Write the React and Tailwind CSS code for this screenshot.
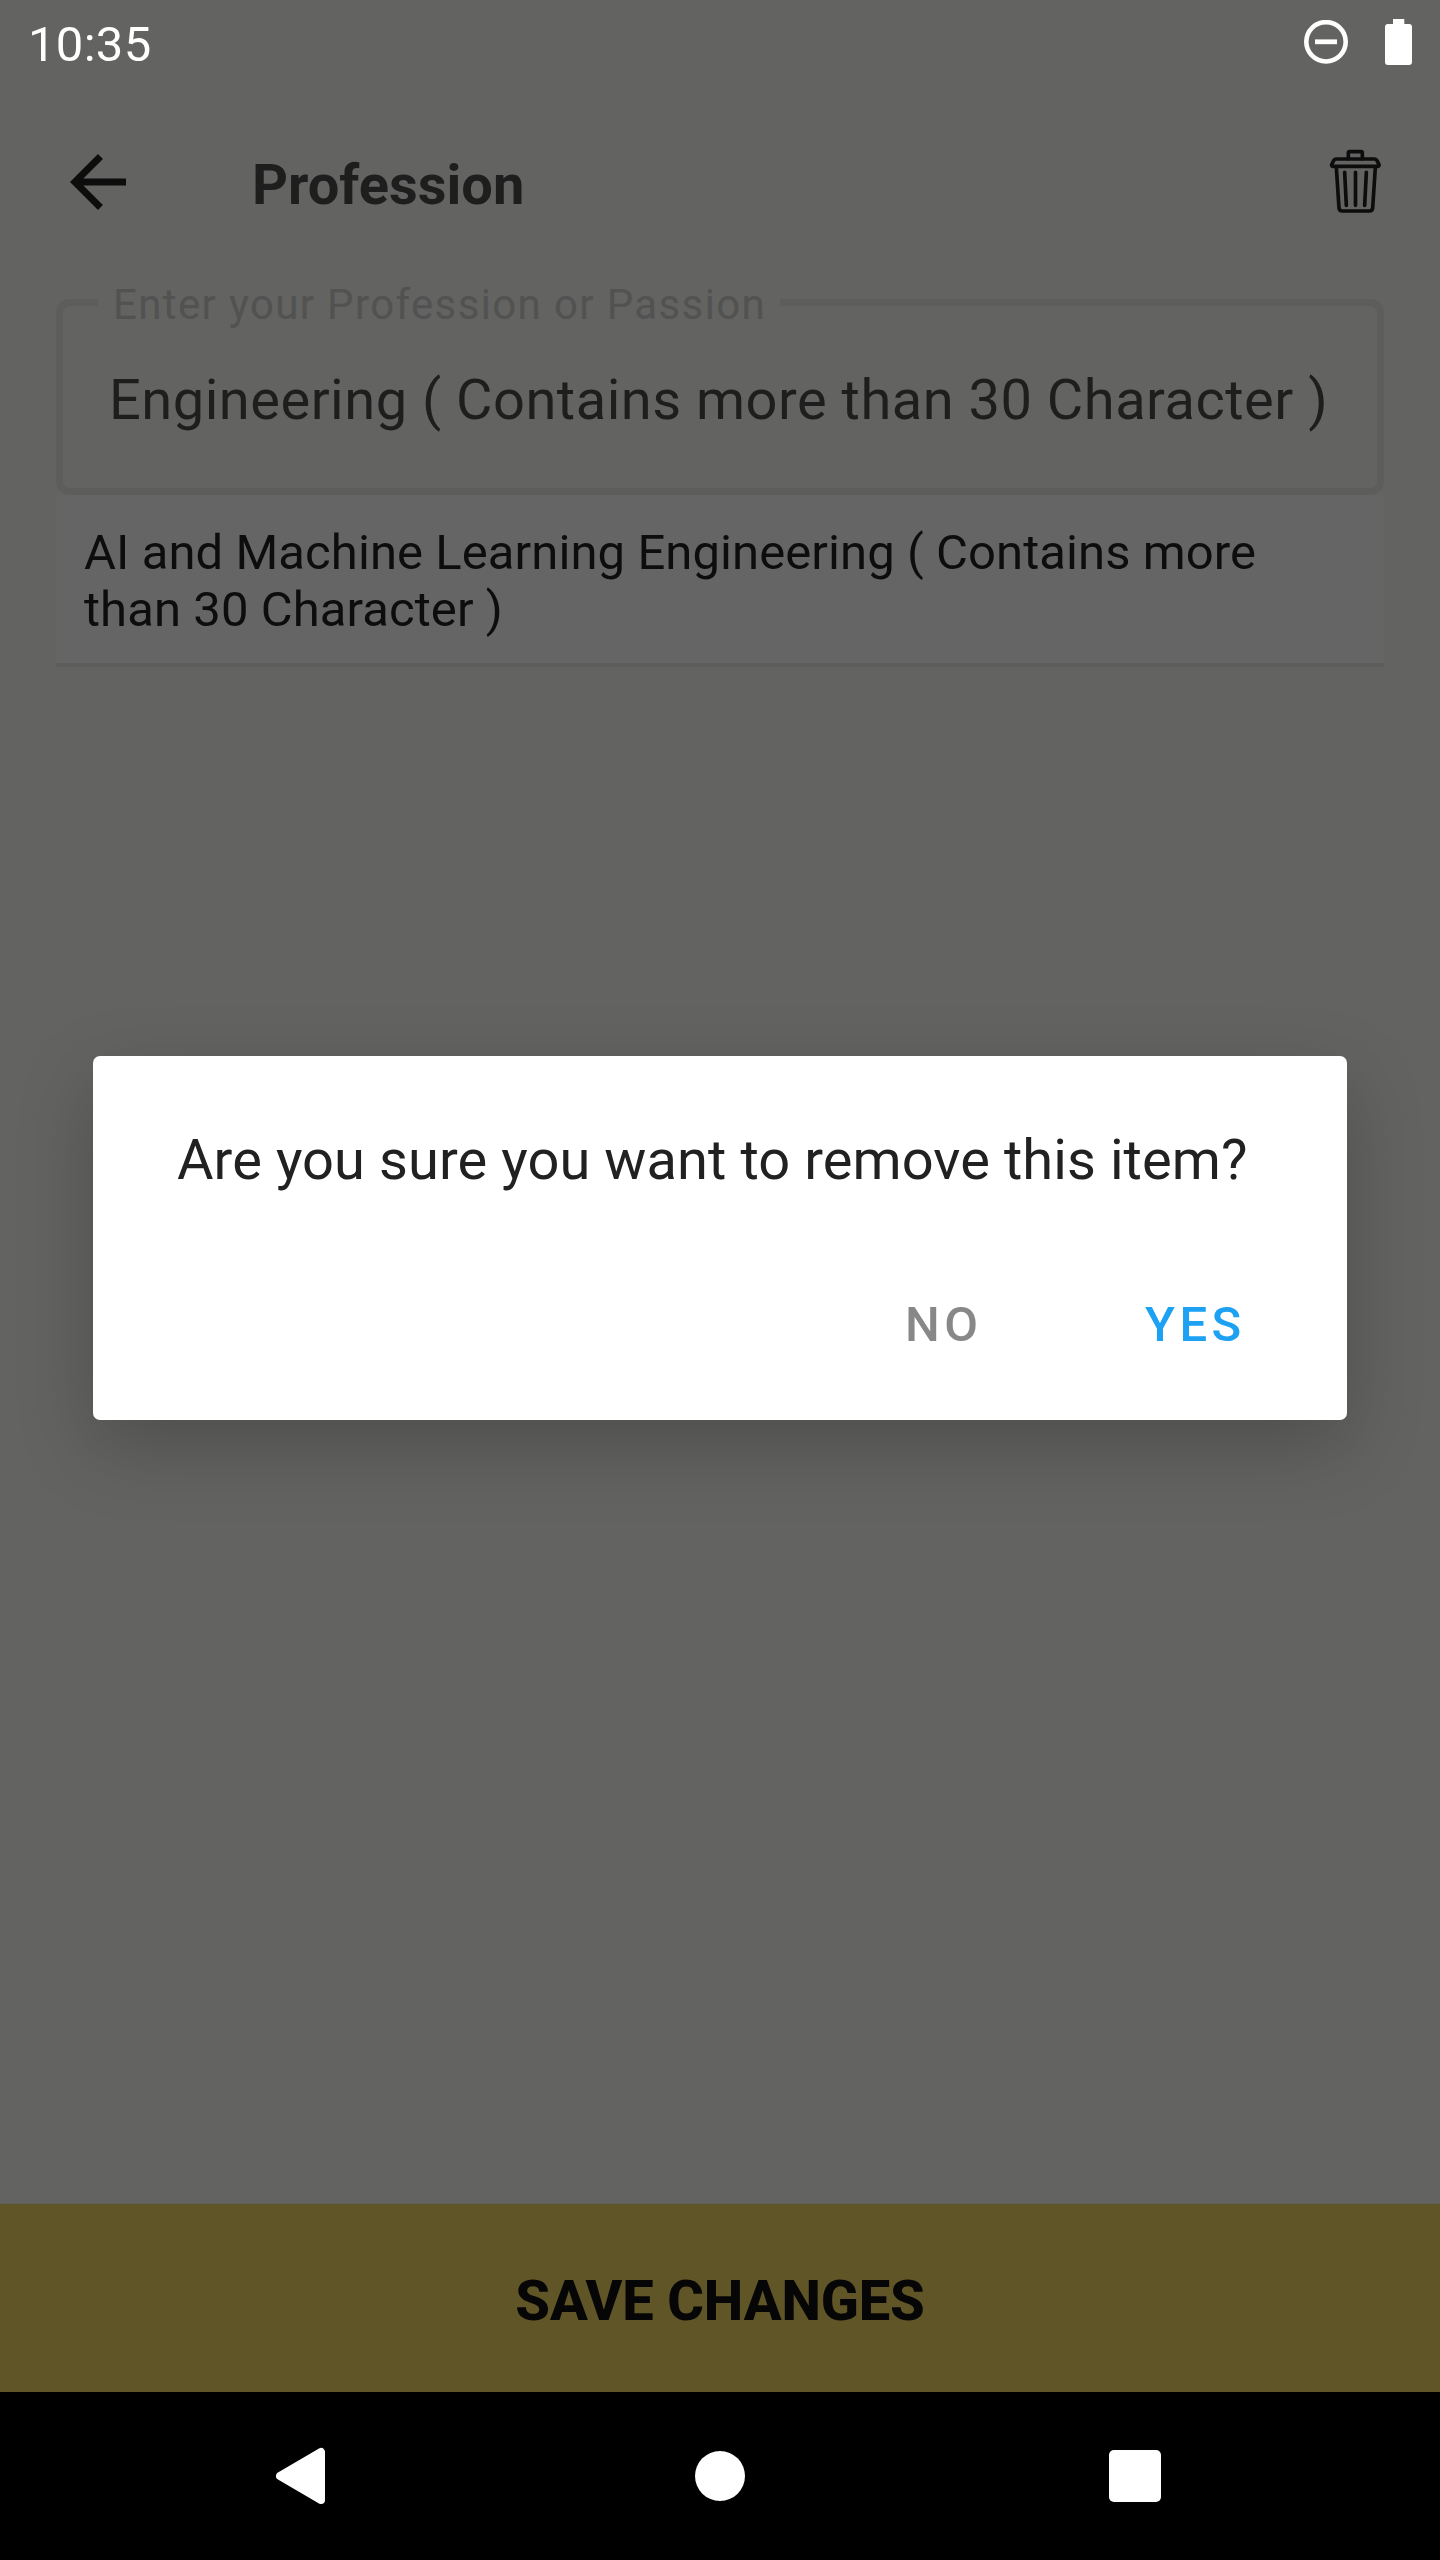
function StatusBar() {
  return (
    <div className="flex h-[84px] justify-between pl-[28px] pr-[28px] text-white">
      <span className="pt-[16px] text-[49px] leading-[57px] tracking-[0.300px]">10:35</span>
      <div className="flex gap-[37px] pt-[19px]">
        <svg className="mt-[1px] h-[45px] w-[44px]" viewBox="0 0 44 45" fill="none" stroke="currentColor">
          <circle cx="22" cy="21.800" r="19.7" strokeWidth="4.6" />
          <path d="M11 21.800h22" strokeWidth="4.8" />
        </svg>
        <svg className="h-[46px] w-[27px]" viewBox="0 0 27 46" fill="currentColor">
          <path d="M8 0h11.3v5H24a3 3 0 0 1 3 3v35a3 3 0 0 1-3 3H3a3 3 0 0 1-3-3V8a3 3 0 0 1 3-3h5z" />
        </svg>
      </div>
    </div>
  );
}

function TrashIcon() {
  return (
    <svg
      className="h-[80px] w-[90px]"
      viewBox="0 0 270 240"
      fill="none"
      stroke="#0d0d0d"
      strokeWidth="11"
      strokeLinecap="round"
      strokeLinejoin="round"
    >
      <path d="M115 57V39q0-4 4-4h34q4 0 4 4v18" />
      <path d="M78 57H194q5 0 7 5L207 74q1 5-3 5H68q-4 0-3-5L71 62q2-5 7-5z" />
      <path d="M79 82L87 204q1 9 10 9H178q9 0 10-9L196 82" />
      <path d="M104 97l5 99M136.500 97v99M169 97l-5 99" />
    </svg>
  );
}

function Header() {
  return (
    <header className="flex h-[196px] items-start pl-[56px] pr-[40px] pt-[56px]">
      <svg className="h-[84px] w-[84px]" viewBox="0 0 24 24" fill="#0d0d0d">
        <path d="M20 11H7.830l5.590-5.590L12 4l-8 8 8 8 1.410-1.410L7.830 13H20v-2z" />
      </svg>
      <h1 className="ml-[112px] mt-[12px] flex-1 text-[56px] font-bold leading-[66px] text-[#1e1e1e]">Profession</h1>
      <TrashIcon />
    </header>
  );
}

function ProfessionField() {
  return (
    <div className="relative mt-[19px] h-[196px] rounded-[14px] border-[7px] border-[#5d5d5b]">
      <label className="absolute left-[35px] top-[-26px] w-[682px] whitespace-nowrap bg-[#636361] pl-[15px] text-[42px] leading-[49px] tracking-[1.370px] text-[#525252]">
        Enter your Profession or Passion
      </label>
      <p className="whitespace-nowrap pl-[46px] pt-[61px] text-[56px] leading-[66px] tracking-[0.500px] text-[#1e1e1e]">
        Engineering ( Contains more than 30 Character )
      </p>
    </div>
  );
}

function Suggestion() {
  return (
    <div className="h-[172px] border-b-[4px] border-[#5d5d5b] bg-[#656565] pl-[28px] pt-[29px] text-[49px] leading-[57px] tracking-[0.080px] text-[#0d0d0d]">
      AI and Machine Learning Engineering ( Contains more
      <br />
      than 30 Character )
    </div>
  );
}

function ConfirmDialog() {
  return (
    <div
      role="dialog"
      className="absolute left-[93px] top-[1056px] h-[364px] w-[1254px] rounded-[7px] bg-white pt-[71px] shadow-[0_26px_76px_rgba(0,0,0,0.21)]"
    >
      <p className="whitespace-nowrap pl-[84px] text-[56px] leading-[66px] tracking-[0.080px] text-[#212121]">
        Are you sure you want to remove this item?
      </p>
      <div className="mt-[103px] flex pl-[812px] text-[49px] font-medium leading-[57px] tracking-[4.500px]">
        <button className="w-[240px] text-left text-[#888888]">NO</button>
        <button className="text-[#1da1f2]">YES</button>
      </div>
    </div>
  );
}

function NavigationBar() {
  return (
    <nav className="flex h-[168px] items-start bg-black pl-[276px] pt-[55px]">
      <svg className="h-[58px] w-[49px]" viewBox="0 0 49 58">
        <path d="M4 29L45 5V53z" fill="#fff" stroke="#fff" strokeWidth="8" strokeLinejoin="round" />
      </svg>
      <div className="ml-[370px] mt-[4px] h-[50px] w-[50px] rounded-full bg-white" />
      <div className="ml-[364px] mt-[3px] h-[52px] w-[52px] rounded-[5px] bg-white" />
    </nav>
  );
}

export default function App() {
  return (
    <div className="relative flex h-[2560px] w-[1440px] flex-col overflow-hidden bg-[#636361] font-[Roboto,sans-serif]">
      <StatusBar />
      <Header />
      <main className="flex-1 px-[56px]">
        <ProfessionField />
        <Suggestion />
      </main>
      <button className="h-[189px] border-t border-[#5f5c5a] bg-[#605527] pt-[5px] text-[56px] font-extrabold leading-[66px] tracking-[-0.120px] text-[#060606]">
        SAVE CHANGES
      </button>
      <NavigationBar />
      <ConfirmDialog />
    </div>
  );
}
